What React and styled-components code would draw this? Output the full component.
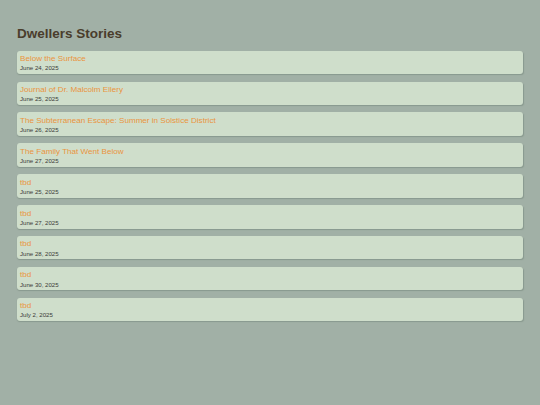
import React from "react";
import styled, { createGlobalStyle } from "styled-components";

const GlobalStyle = createGlobalStyle`
  html, body {
    margin: 0;
    padding: 0;
    background-color: #a1b0a6;
  }
  body {
    font-family: "Liberation Sans", Arial, sans-serif;
  }
`

const Page = styled.div`
  min-height: 405px;
  padding: 25.5px 17px 20px 17px;
  box-sizing: border-box;
`

const Title = styled.h2`
  margin: 0 0 9.7px 0;
  font-size: 13.5px;
  font-weight: bold;
  color: #4a3d2c;
  line-height: 15.5px;
`

const StoryList = styled.ul`
  list-style: none;
  margin: 0;
  padding: 0;
  display: flex;
  flex-direction: column;
  gap: 7.375px;
  width: 505.5px;
`

const StoryCard = styled.li`
  background-color: #cfdecb;
  border-radius: 3px;
  padding: 3.5px 3px 2.5px 3px;
  height: 23.5px;
  box-sizing: border-box;
  box-shadow: 0.5px 1px 1px rgba(80, 100, 88, 0.3);
  display: flex;
  flex-direction: column;
  gap: 1px;
`

const StoryLink = styled.a`
  font-size: 8.1px;
  line-height: 9.3px;
  color: #ea9440;
  text-decoration: none;
`

const StoryDate = styled.span`
  font-size: 6.1px;
  line-height: 7px;
  color: #3b3b38;
`

const stories = [
  { title: "Below the Surface", date: "June 24, 2025" },
  { title: "Journal of Dr. Malcolm Ellery", date: "June 25, 2025" },
  { title: "The Subterranean Escape: Summer in Solstice District", date: "June 26, 2025" },
  { title: "The Family That Went Below", date: "June 27, 2025" },
  { title: "tbd", date: "June 25, 2025" },
  { title: "tbd", date: "June 27, 2025" },
  { title: "tbd", date: "June 28, 2025" },
  { title: "tbd", date: "June 30, 2025" },
  { title: "tbd", date: "July 2, 2025" }
];

export default function App() {
  return (
    <Page>
      <GlobalStyle />
      <Title>Dwellers Stories</Title>
      <StoryList>
        {stories.map((story, i) => (
          <StoryCard key={i}>
            <StoryLink href="#">{story.title}</StoryLink>
            <StoryDate>{story.date}</StoryDate>
          </StoryCard>
        ))}
      </StoryList>
    </Page>
  );
}
